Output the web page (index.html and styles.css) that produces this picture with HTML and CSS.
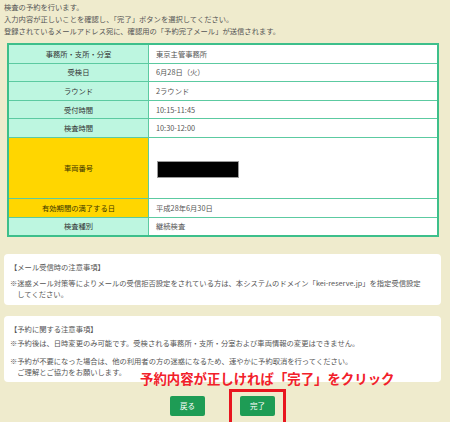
FILE: index.html
```html
<!DOCTYPE html>
<html lang="ja">
<head>
<meta charset="utf-8">
<title>予約内容確認</title>
<link rel="stylesheet" href="styles.css">
</head>
<body>
<div class="page">
  <div class="intro">
    <p>検査の予約を行います。</p>
    <p>入力内容が正しいことを確認し、「完了」ボタンを選択してください。</p>
    <p>登録されているメールアドレス宛に、確認用の「予約完了メール」が送信されます。</p>
  </div>

  <table class="confirm">
    <colgroup><col class="col-label"><col></colgroup>
    <tr><th>事務所・支所・分室</th><td>東京主管事務所</td></tr>
    <tr><th>受検日</th><td>6月28日（火）</td></tr>
    <tr><th>ラウンド</th><td>2ラウンド</td></tr>
    <tr><th>受付時間</th><td>10:15-11:45</td></tr>
    <tr><th>検査時間</th><td>10:30-12:00</td></tr>
    <tr class="tall"><th class="warn">車両番号</th><td><div class="redact"></div></td></tr>
    <tr><th class="warn">有効期間の満了する日</th><td>平成28年6月30日</td></tr>
    <tr class="last"><th>検査種別</th><td>継続検査</td></tr>
  </table>

  <div class="notice notice-mail">
    <p class="notice-title">【メール受信時の注意事項】</p>
    <p class="note">※迷惑メール対策等によりメールの受信拒否設定をされている方は、本システムのドメイン「kei-reserve.jp」を指定受信設定<br>してください。</p>
  </div>

  <div class="notice notice-reserve">
    <p class="notice-title">【予約に関する注意事項】</p>
    <p class="note">※予約後は、日時変更のみ可能です。受検される事務所・支所・分室および車両情報の変更はできません。</p>
    <p class="note note-gap">※予約が不要になった場合は、他の利用者の方の迷惑になるため、速やかに予約取消を行ってください。<br>ご理解とご協力をお願いします。</p>
  </div>

  <div class="actions">
    <button class="btn" type="button">戻る</button>
    <button class="btn" type="button">完了</button>
  </div>

  <p class="callout">予約内容が正しければ「完了」をクリック</p>
  <div class="highlight"></div>
</div>
</body>
</html>
```

FILE: styles.css
```css
html, body {
  margin: 0;
  padding: 0;
}
body {
  background: #efebcd;
  font-family: "Noto Sans CJK JP", "Noto Sans", sans-serif;
  font-size: 7.3px;
  color: #555;
  width: 450px;
  height: 422px;
  overflow: hidden;
}
p {
  margin: 0;
}
.page {
  position: relative;
  height: 422px;
}
.intro {
  padding: 1px 0 0 4px;
  line-height: 12px;
}
.confirm {
  box-sizing: border-box;
  width: 432px;
  margin: 6px 0 0 7px;
  border: 2px solid #3dbf8b;
  border-spacing: 0;
  table-layout: fixed;
  background: #fff;
}
.col-label {
  width: 140px;
}
.confirm th,
.confirm td {
  box-sizing: border-box;
  height: 18.6px;
  padding: 0 7px;
  border-bottom: 1px solid #5ccaa1;
  font-size: 7.3px;
  line-height: 10px;
  vertical-align: middle;
}
.confirm th {
  background: #bdf6e0;
  border-right: 1px solid #5ccaa1;
  color: #333;
  font-weight: normal;
  text-align: center;
}
.confirm td {
  text-align: left;
  color: #555;
}
.confirm th.warn {
  background: #ffd600;
  color: #3d3500;
}
.confirm tr.tall th,
.confirm tr.tall td {
  height: 61px;
}
.confirm tr.last th,
.confirm tr.last td {
  height: 17.4px;
  border-bottom: 0;
}
.redact {
  width: 80px;
  height: 15px;
  margin: 4px 0 0 1px;
  background: #000;
  border: 1px solid #9a9a9a;
}
.notice {
  width: 437px;
  margin-left: 4px;
  box-sizing: border-box;
  background: #fff;
  border-radius: 4px;
  padding: 8px 6px 5px 6px;
  line-height: 11px;
  color: #555;
}
.notice-mail {
  margin-top: 17px;
}
.notice-reserve {
  margin-top: 11px;
  padding-bottom: 4px;
}
.notice-title {
  margin-bottom: 5px;
}
.notice-reserve .notice-title {
  margin-bottom: 3px;
}
.note {
  padding-left: 1em;
  text-indent: -1em;
  white-space: nowrap;
}
.note-gap {
  margin-top: 7px;
}
.actions {
  display: flex;
  justify-content: center;
  gap: 35px;
  padding-right: 5px;
  margin-top: 14px;
}
.btn {
  width: 35px;
  height: 20px;
  padding: 0;
  border: 0;
  border-radius: 2px;
  background: #1e9c55;
  color: #fff;
  font-family: "Noto Sans CJK JP", "Noto Sans", sans-serif;
  font-size: 7.5px;
  line-height: 20px;
}
.callout {
  position: absolute;
  left: 140px;
  top: 370px;
  margin: 0;
  font-size: 13.4px;
  line-height: 17px;
  font-weight: bold;
  color: #f2202a;
  white-space: nowrap;
}
.highlight {
  position: absolute;
  left: 229px;
  top: 389px;
  width: 57px;
  height: 40px;
  box-sizing: border-box;
  border: 3.5px solid #e8151f;
}
```
